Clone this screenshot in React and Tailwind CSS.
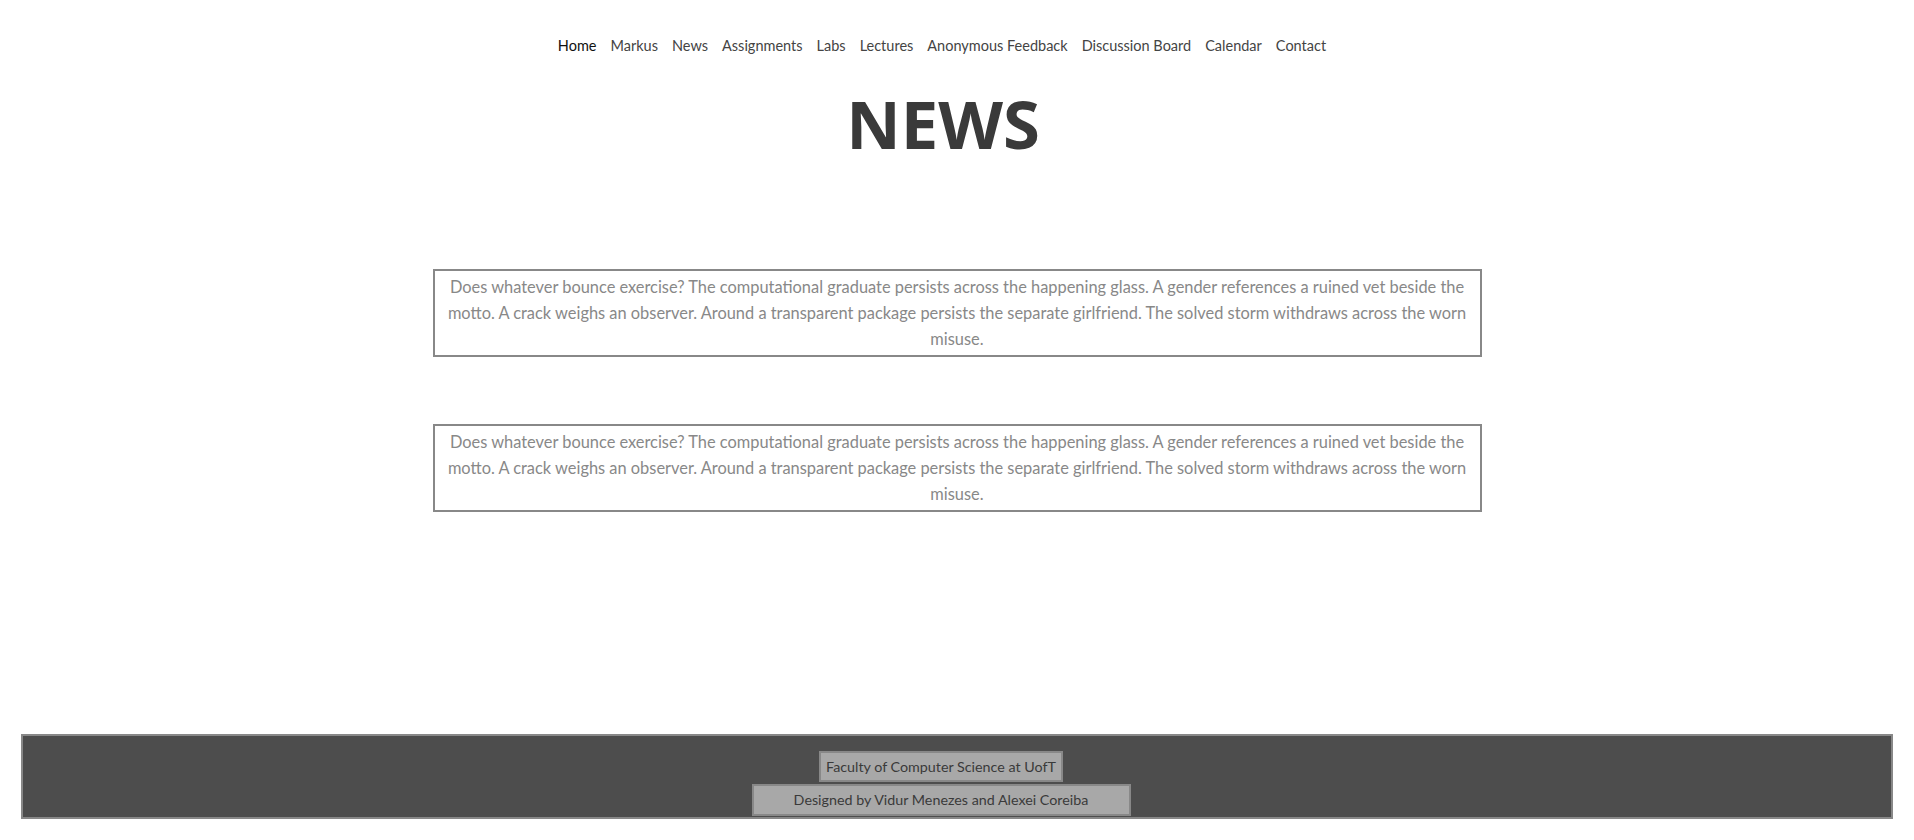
import React from 'react'

const links = ['Home', 'Markus', 'News', 'Assignments', 'Labs', 'Lectures', 'Anonymous Feedback', 'Discussion Board', 'Calendar', 'Contact']

const post =
  'Does whatever bounce exercise? The computational graduate persists across the happening glass. A gender references a ruined vet beside the motto. A crack weighs an observer. Around a transparent package persists the separate girlfriend. The solved storm withdraws across the worn misuse.'

function NewsBox({ text }) {
  return (
    <div className="mx-auto w-[1049px] border-2 border-[#888] px-2 py-[3px] text-center text-[16.4px] leading-[26px] text-[#888]">
      {text}
    </div>
  )
}

export default function App() {
  return (
    <div className="min-h-[840px] bg-white font-['Lato','Liberation_Sans',sans-serif]">
      {/* top nav */}
      <nav className="flex h-[92px] items-center justify-center gap-[14px] pr-[30px] text-[14.5px] text-[#444]">
        {links.map((l) => (
          <a key={l} className={l === 'Home' ? 'text-[#111]' : ''}>
            {l}
          </a>
        ))}
      </nav>

      <h1 className="-mt-[2px] pr-[28px] text-center font-['Open_Sans',sans-serif] text-[67px] font-bold leading-none text-[#3a3a3a]">
        NEWS
      </h1>

      <div className="mt-[112px] flex flex-col gap-[67px]">
        <NewsBox text={post} />
        <NewsBox text={post} />
      </div>

      <footer className="ml-[21px] mr-[21px] mt-[222px] flex flex-col items-center gap-[2px] border-2 border-[#888] bg-[#4d4d4d] pt-[15px] pb-[1px] pr-[32px] text-[14.3px] text-[#3a3a3a]">
        <div className="flex h-[31px] w-[244px] items-center justify-center border-2 border-[#888] bg-[#a8a8a8]">
          Faculty of Computer Science at UofT
        </div>
        <div className="flex h-[32px] w-[379px] items-center justify-center border-2 border-[#888] bg-[#a8a8a8]">
          Designed by Vidur Menezes and Alexei Coreiba
        </div>
      </footer>
    </div>
  )
}
